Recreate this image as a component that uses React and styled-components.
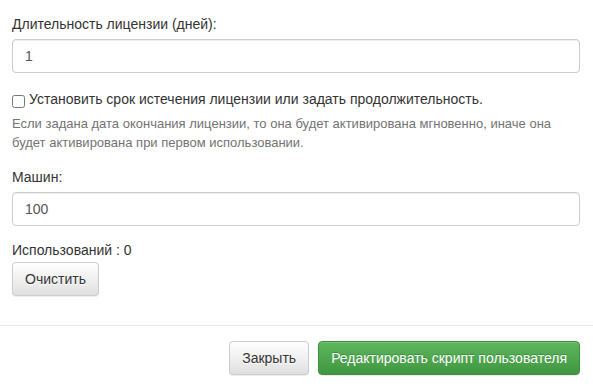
import React from "react";
import styled, { createGlobalStyle } from "styled-components";

const GlobalStyle = createGlobalStyle`
  * {
    box-sizing: border-box;
  }

  body {
    margin: 0;
    background: #fff;
    color: #333;
    font-family: "Liberation Sans", Arial, Helvetica, sans-serif;
    font-size: 14px;
    line-height: 1.42857;
  }
`;

const Modal = styled.div`
  width: 593px;
  background: #fff;
`;

const Body = styled.div`
  padding: 14px 13px 29px 12px;
`;

const Label = styled.label`
  display: block;
  line-height: 20px;
  margin: ${(p) => (p.$first ? "0" : "15px")} 0 5px;
  font-weight: normal;
`;

const Input = styled.input`
  display: block;
  width: 100%;
  height: 34px;
  padding: 6px 12px;
  font-family: inherit;
  font-size: 14px;
  color: #555;
  background: #fff;
  border: 1px solid #ccc;
  border-radius: 4px;
  box-shadow: inset 0 1px 1px rgba(0, 0, 0, 0.075);
  outline: none;
`;

const CheckRow = styled.label`
  display: flex;
  align-items: center;
  height: 20px;
  margin-top: 17px;
  cursor: pointer;

  input {
    width: 13px;
    height: 13px;
    margin: 2px 4px 0 0;
  }
`;

const Help = styled.p`
  margin: 5px 0 0;
  font-size: 13px;
  line-height: 1.42857;
  color: #737373;
`;

const Usage = styled.div`
  margin-top: 14px;
  line-height: 20px;
`;

const Button = styled.button`
  display: inline-block;
  height: 34px;
  padding: 6px 12px;
  font-family: inherit;
  font-size: 14px;
  line-height: 20px;
  border-radius: 4px;
  border: 1px solid;
  cursor: pointer;
  white-space: nowrap;
  box-shadow: inset 0 1px 0 rgba(255, 255, 255, 0.15),
    0 1px 1px rgba(0, 0, 0, 0.075);

  ${(p) =>
    p.$variant === "success"
      ? `
    color: #fff;
    background-image: linear-gradient(to bottom, #5cb85c 0, #419641 100%);
    border-color: #3e8f3e;
    text-shadow: 0 -1px 0 rgba(0, 0, 0, 0.2);
  `
      : `
    color: #333;
    background-image: linear-gradient(to bottom, #fff 0, #e0e0e0 100%);
    border-color: #ccc;
    text-shadow: 0 1px 0 #fff;
  `}
`;

const ClearButton = styled(Button)`
  margin-top: 2px;
`;

const Footer = styled.div`
  display: flex;
  justify-content: flex-end;
  gap: 9px;
  padding: 15px 13px 15px 12px;
  border-top: 1px solid #e5e5e5;
`;

export default function App() {
  return (
    <Modal>
      <GlobalStyle />
      <Body>
        <Label $first>Длительность лицензии (дней):</Label>
        <Input type="text" defaultValue="1" />

        <CheckRow>
          <input type="checkbox" />
          Установить срок истечения лицензии или задать продолжительность.
        </CheckRow>
        <Help>
          Если задана дата окончания лицензии, то она будет активирована
          мгновенно, иначе она будет активирована при первом использовании.
        </Help>

        <Label>Машин:</Label>
        <Input type="text" defaultValue="100" />

        <Usage>Использований : 0</Usage>
        <ClearButton>Очистить</ClearButton>
      </Body>
      <Footer>
        <Button>Закрыть</Button>
        <Button $variant="success">Редактировать скрипт пользователя</Button>
      </Footer>
    </Modal>
  );
}
